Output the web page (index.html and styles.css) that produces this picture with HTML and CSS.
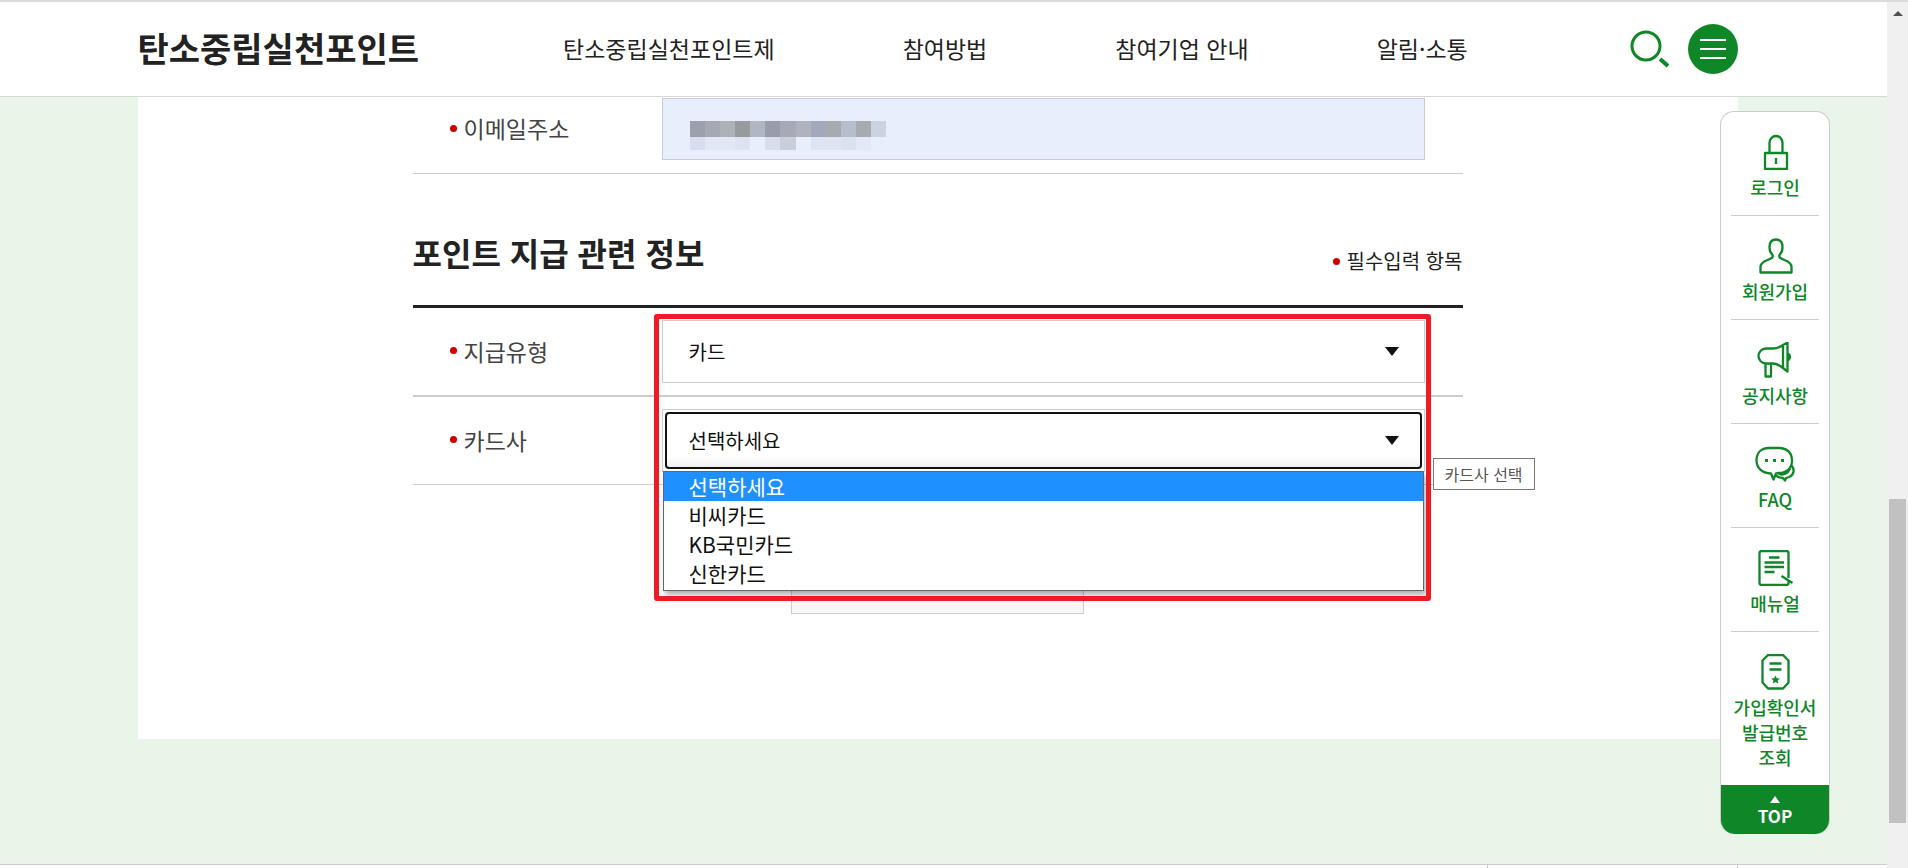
FILE: index.html
```html
<!DOCTYPE html>
<html lang="ko">
<head>
    <meta charset="UTF-8">
    <meta name="viewport" content="width=device-width, initial-scale=1.0">
    <title>탄소중립실천포인트</title>
    <link rel="stylesheet" href="styles.css">
</head>
<body>
    <div class="page">
        <header class="header">
            <div class="header-inner">
                <a class="logo" href="#">탄소중립실천포인트</a>
                <nav class="gnb">
                    <a href="#">탄소중립실천포인트제</a>
                    <a href="#">참여방법</a>
                    <a href="#">참여기업 안내</a>
                    <a href="#">알림·소통</a>
                </nav>
                <div class="header-btns">
                    <button type="button" class="btn-search" aria-label="검색">
                        <svg width="40" height="38" viewBox="0 0 40 38" fill="none" stroke="#0f8628">
                            <circle cx="16" cy="16" r="14" stroke-width="3"/>
                            <path d="M30 29l8 7" stroke-width="4"/>
                        </svg>
                    </button>
                    <button type="button" class="btn-menu" aria-label="전체메뉴">
                        <svg width="26" height="20" viewBox="0 0 26 20" stroke="#fff" stroke-width="2">
                            <path d="M0 1h26M0 10h26M0 19h26"/>
                        </svg>
                    </button>
                </div>
            </div>
        </header>

        <main class="main">
            <form class="card">
                <div class="form">
                    <div class="row row-email">
                        <label class="label" for="email">이메일주소</label>
                        <div class="field">
                            <input type="email" id="email" class="input">
                            <svg class="masked" width="196" height="29" viewBox="0 0 195 28" preserveAspectRatio="none" shape-rendering="crispEdges">
                                <path fill="#9c9fac" d="M0 0h15v15H0z"/>
                                <path fill="#a6a9b1" d="M15 0h15v15H15z"/>
                                <path fill="#adb2b9" d="M30 0h15v15H30z"/>
                                <path fill="#989b9e" d="M45 0h15v15H45z"/>
                                <path fill="#afb7c3" d="M60 0h15v15H60z"/>
                                <path fill="#999daa" d="M75 0h15v15H75z"/>
                                <path fill="#a5aab4" d="M90 0h15v15H90z"/>
                                <path fill="#b0b2bf" d="M105 0h15v15h-15z"/>
                                <path fill="#a3a8bc" d="M120 0h15v15h-15z"/>
                                <path fill="#a7abb0" d="M135 0h15v15h-15z"/>
                                <path fill="#b6bdcc" d="M150 0h15v15h-15z"/>
                                <path fill="#a6abb0" d="M165 0h15v15h-15z"/>
                                <path fill="#cbd2e0" d="M180 0h15v15h-15z"/>
                                <path fill="#d8deef" d="M0 15h15v13H0z"/>
                                <path fill="#e1e7f5" d="M15 15h30v13H15z"/>
                                <path fill="#dde3f0" d="M45 15h15v13H45z"/>
                                <path fill="#d8deeb" d="M75 15h15v13H75z"/>
                                <path fill="#c8ceda" d="M90 15h15v13H90z"/>
                                <path fill="#dfe4f2" d="M120 15h30v13h-30z"/>
                                <path fill="#dbe1ee" d="M150 15h15v13h-15z"/>
                                <path fill="#e2e8f6" d="M165 15h15v13h-15z"/>
                            </svg>
                        </div>
                    </div>

                    <div class="title-bar">
                        <h2>포인트 지급 관련 정보</h2>
                        <p class="required">필수입력 항목</p>
                    </div>

                    <div class="rows">
                        <div class="row row-type">
                            <label class="label" for="pay-type">지급유형</label>
                            <div class="field">
                                <div class="select-box">
                                    <select id="pay-type" class="select">
                                        <option>카드</option>
                                    </select>
                                </div>
                            </div>
                        </div>
                        <div class="row">
                            <label class="label" for="card">카드사</label>
                            <div class="field">
                                <div class="select-box">
                                    <select id="card" class="select open">
                                        <option>선택하세요</option>
                                        <option>비씨카드</option>
                                        <option>KB국민카드</option>
                                        <option>신한카드</option>
                                    </select>
                                </div>
                                <ul class="options" role="listbox">
                                    <li class="on" role="option" aria-selected="true">선택하세요</li>
                                    <li role="option">비씨카드</li>
                                    <li role="option">KB국민카드</li>
                                    <li role="option">신한카드</li>
                                </ul>
                                <div class="tooltip" role="tooltip">카드사 선택</div>
                            </div>
                        </div>
                        <div class="highlight"></div>
                    </div>

                    <div class="form-btns">
                        <button type="button" class="btn"></button>
                    </div>
                </div>
            </form>
        </main>

        <footer class="footer">
            <div class="footer-inner"><div class="footer-link"></div></div>
        </footer>

        <aside class="quick">
            <a class="quick-item" href="#">
                <svg width="40" height="36" viewBox="0 0 40 36">
                    <path d="M10 19h22v16H10zM14.500 19V9a6.500 7 0 0 1 13 0v10M21 24v6"/>
                </svg>
                <span>로그인</span>
            </a>
            <a class="quick-item" href="#">
                <svg width="40" height="36" viewBox="0 0 40 36">
                    <path d="M5.500 34.500V29c0-4 3-5.500 7-7 4-1.400 6-2.500 5-5-2-2-3-4-3-8 0-5 2-7.500 6.500-7.500s6.500 2.500 6.500 7.500c0 4-1 6-3 8-1 2.500 1 3.600 5 5 4 1.500 7 3 7 7v5.500z"/>
                </svg>
                <span>회원가입</span>
            </a>
            <a class="quick-item" href="#">
                <svg width="40" height="36" viewBox="0 0 40 36">
                    <path d="M28 3C25 5 22 6.500 18 6.500h-7a7.500 7.500 0 0 0 0 15h7c4 0 7 2 10 4.500zM28 3l4.500-2.500v29L28 26M10.500 22v12.500h5.500V22"/>
                    <path d="M33.500 12c2 1 2 5 0 6z" fill="#0f8628"/>
                </svg>
                <span>공지사항</span>
            </a>
            <a class="quick-item" href="#">
                <svg width="40" height="36" viewBox="0 0 40 36">
                    <path d="M14 2h10c8 0 13 5 13 12.500S32 27 24 27l-3 .5-2.500 6L16 27.500C7 27 1.500 22 1.500 14.500S6 2 14 2z"/>
                    <path d="M36.500 19.500c3.500 4 2.500 9-2 11.500l-3.500 1-1 2.500-2-2.500c-3 0-5-1-7-2.500M24 27.500c4 2.500 9 0 11-5"/>
                    <path d="M10 14.500h3M18 14.500h3M26 14.500h3" stroke-width="3"/>
                </svg>
                <span>FAQ</span>
            </a>
            <a class="quick-item" href="#">
                <svg width="40" height="36" viewBox="0 0 40 36">
                    <path d="M33.500 30v3a2 2 0 0 1-2 2H6.500a2 2 0 0 1-2-2V3a2 2 0 0 1 2-2h25a2 2 0 0 1 2 2v25M14 7.500h10.500M9.500 12.500h19.500M9.500 17h19.500M9.500 22h10M26.500 26l11 7"/>
                </svg>
                <span>매뉴얼</span>
            </a>
            <a class="quick-item" href="#">
                <svg width="40" height="36" viewBox="0 0 40 36">
                    <path d="M13 1h15l5.500 5.500v22L28 34.500H13l-5.500-6v-22zM14.500 9.500h12M14.500 15.500h12"/>
                    <path class="star" d="M20.500 21.500l1.300 2.700 3 .4-2.200 2 .6 3-2.700-1.500-2.700 1.500.6-3-2.200-2 3-.4z"/>
                </svg>
                <span>가입확인서<br>발급번호<br>조회</span>
            </a>
            <a class="quick-top" href="#">
                <svg width="10" height="7" viewBox="0 0 10 7"><path d="M5 0l5 7H0z"/></svg>
                TOP
            </a>
        </aside>
    </div>

    <div class="scrollbar">
        <svg class="scroll-up" width="10" height="5" viewBox="0 0 10 5"><path d="M5 0l5 5H0z" fill="#505050"/></svg>
        <div class="scroll-track">
            <div class="scroll-thumb"></div>
        </div>
    </div>
</body>
</html>
```
FILE: styles.css
```css
* {
    box-sizing: border-box;
}
body {
    margin: 0;
    height: 100vh;
    display: flex;
    overflow: hidden;
    border-top: 2px solid #dcdcdc;
    background: #fff;
    color: #222;
    font-family: "Noto Sans CJK KR", "Noto Sans", sans-serif;
    font-size: 20px;
}
a {
    color: inherit;
    text-decoration: none;
}
button {
    padding: 0;
    border: 0;
    cursor: pointer;
}
.page {
    flex: 1;
    position: relative;
    display: flex;
    flex-direction: column;
}

/* header */
.header {
    height: 95px;
    padding-right: 12px;
    border-bottom: 1px solid #d5d8d5;
    background: #fff;
}
.header-inner {
    display: flex;
    align-items: center;
    max-width: 1600px;
    height: 100%;
    margin: 0 auto;
}
.logo {
    padding-bottom: 3px;
    font-size: 34px;
    font-weight: 700;
}
.gnb {
    display: flex;
    gap: 128px;
    margin-left: 144px;
    padding-bottom: 3px;
    font-size: 23px;
}
.header-btns {
    display: flex;
    align-items: center;
    gap: 18px;
    margin-left: auto;
}
.btn-search {
    display: flex;
    background: none;
}
.btn-menu {
    display: flex;
    align-items: center;
    justify-content: center;
    width: 50px;
    height: 50px;
    border-radius: 50%;
    background: #0f8628;
}

/* form */
.main {
    flex: 1;
    padding: 0 12px 125px 0;
    background: #e8f5e8;
}
.card {
    max-width: 1600px;
    margin: 0 auto;
    padding-bottom: 125px;
    background: #fff;
}
.form {
    max-width: 1050px;
    margin: 0 auto;
}
.rows {
    position: relative;
}
.row {
    display: flex;
    align-items: center;
    padding: 12px 38px 12px 0;
    border-bottom: 1px solid #ccc;
}
.row-email {
    padding-top: 1px;
    padding-bottom: 13px;
}
.row-type {
    border-bottom-width: 2px;
}
.label {
    display: flex;
    align-items: center;
    gap: 7px;
    width: 249px;
    padding: 0 0 2px 37px;
    color: #444;
    font-size: 23px;
}
.label::before,
.required::before {
    content: "";
    width: 7px;
    height: 7px;
    border-radius: 50%;
    background: #d00000;
}
.field {
    flex: 1;
    position: relative;
}
.input {
    display: block;
    width: 100%;
    height: 62px;
    padding: 0 26px;
    border: 1px solid #c8ccd4;
    background: #e8effc;
    font: inherit;
}
.masked {
    position: absolute;
    top: 23px;
    left: 28px;
}
.title-bar {
    display: flex;
    align-items: flex-end;
    justify-content: space-between;
    padding: 55px 0 30px;
    border-bottom: 3px solid #222;
}
.title-bar h2 {
    margin: 0;
    font-size: 32px;
    line-height: 46px;
}
.required {
    display: flex;
    align-items: center;
    gap: 7px;
    margin: 0;
    line-height: 28px;
}
.select-box {
    position: relative;
    height: 63px;
    padding: 2px;
    border: 1px solid #ccc;
}
.select-box::after {
    content: "";
    position: absolute;
    top: 26px;
    right: 25px;
    border: 7px solid transparent;
    border-top: 9px solid #111;
    border-bottom: 0;
    pointer-events: none;
}
.select {
    display: block;
    width: 100%;
    height: 100%;
    padding: 0 22px;
    border: 2px solid transparent;
    border-radius: 4px;
    outline: none;
    background: #fff;
    color: #111;
    font: inherit;
    appearance: none;
}
.select.open {
    border-color: #111;
    background: linear-gradient(#fff 80%, #f0f0f0);
}
.options {
    position: absolute;
    top: 62px;
    left: 1px;
    right: 1px;
    z-index: 1;
    margin: 0;
    padding: 0 0 2px;
    border: 1px solid #666;
    background: #fff;
    box-shadow: 2px 4px 5px rgba(0,0,0,0.3);
    color: #111;
    font-size: 21px;
    line-height: 29px;
    list-style: none;
}
.options li {
    padding-left: 25px;
}
.options .on {
    background: #1e90ff;
    color: #fff;
}
.tooltip {
    position: absolute;
    top: 49px;
    left: calc(100% + 8px);
    padding: 0 11px;
    border: 1px solid #777;
    background: #fff;
    color: #555;
    font-size: 16px;
    line-height: 30px;
    white-space: nowrap;
}
/* box drawn round the two selects */
.highlight {
    position: absolute;
    top: 6px;
    left: 241px;
    right: 32px;
    height: 287px;
    z-index: 2;
    border: 5px solid #ed1c24;
    border-radius: 3px;
    pointer-events: none;
}
.form-btns {
    display: flex;
    justify-content: center;
    margin-top: 65px;
}
.btn {
    width: 293px;
    height: 64px;
    border: 1px solid #ccc;
    background: #f7f7f7;
}

/* footer */
.footer {
    height: 4px;
    padding-right: 12px;
    border-top: 1px solid #ccc;
}
.footer-inner {
    display: flex;
    justify-content: flex-end;
    max-width: 1600px;
    height: 100%;
    margin: 0 auto;
}
.footer-link {
    width: 251px;
    border: 1px solid #ccc;
    border-width: 0 1px;
}

/* quick menu */
.quick {
    position: absolute;
    top: 109px;
    right: 57px;
    width: 110px;
    border: 1px solid #ccc;
    border-bottom: 0;
    border-radius: 14px;
    background: #fff;
    color: #0f8628;
    font-size: 18px;
    font-weight: 500;
    line-height: 25px;
    text-align: center;
}
.quick-item {
    display: flex;
    flex-direction: column;
    align-items: center;
    gap: 5px;
    margin: 0 10px;
    padding: 22px 0 15px;
    border-bottom: 1px solid #ccc;
}
.quick-item:nth-child(6) {
    border-bottom: 0;
}
.quick-item span {
    white-space: nowrap;
}
.quick-item svg {
    fill: none;
    stroke: #0f8628;
    stroke-width: 2.3;
    stroke-linejoin: round;
}
.quick-item .star {
    fill: #0f8628;
    stroke: none;
}
.quick-top {
    display: flex;
    flex-direction: column;
    align-items: center;
    padding: 11px 0 6px;
    border-radius: 0 0 14px 14px;
    background: #0f8628;
    color: #fff;
    font-size: 17px;
    font-weight: 700;
}
.quick-top svg {
    fill: #fff;
}

/* scrollbar */
.scrollbar {
    display: flex;
    flex-direction: column;
    align-items: center;
    width: 21px;
    padding: 9px 0 20px;
    background: #f0f0f0;
}
.scroll-track {
    flex: 1;
    display: grid;
    grid-template-rows: 58fr 39fr 3fr;
    width: 17px;
}
.scroll-thumb {
    grid-row: 2;
    background: #c1c1c1;
}
```
